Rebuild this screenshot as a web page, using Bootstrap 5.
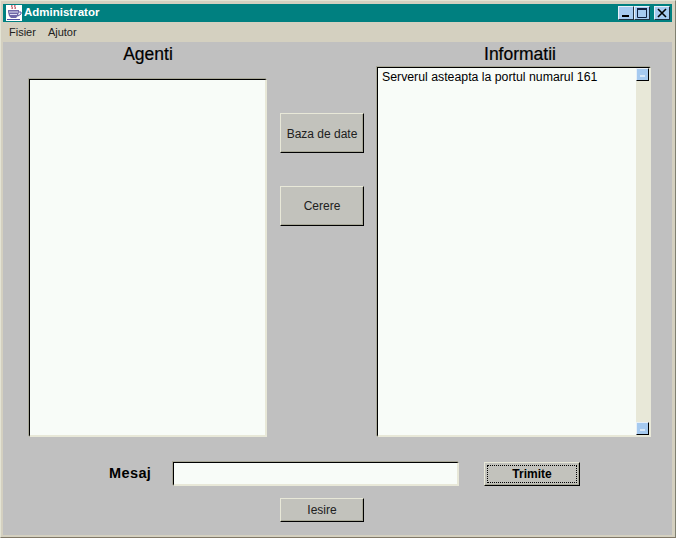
<!DOCTYPE html>
<html lang="ro">
<head>
<meta charset="utf-8">
<title>Administrator</title>
<link href="https://cdn.jsdelivr.net/npm/bootstrap@5.3.0/dist/css/bootstrap.min.css" rel="stylesheet">
<style>
html,body{margin:0;height:538px;overflow:hidden;background:#c0c0c0;}
body{font-family:"Liberation Sans",Arial,sans-serif;font-size:12px;color:#000;}
.win-frame{width:676px;height:538px;background:#d4d0c0;padding:3px 3px 2px 2px;border-left:1px solid #e4e4d4;border-top:1px solid #e4e4d4;border-right:1px solid #808070;border-bottom:1px solid #807868;}
.title-strip{height:18px;background:#008080;color:#fff;font-weight:700;font-size:11.5px;padding:0 2px 0 3px;}
.title-icon{margin-right:2px;margin-top:-1px;}
.ctl-btn{width:16px;height:14px;background:#a6caf0;border:1px solid;border-color:#e8f0f8 #203040 #203040 #e8f0f8;display:flex;align-items:center;justify-content:center;}
.menu-strip{height:20px;background:#d4d0c0;font-size:11px;color:#202020;padding:1px 0 0 6px;gap:12px;}
.work-area{height:493px;background:#c0c0c0;padding-left:26px;}
.col-left{width:238px;}
.col-right{width:274px;}
.head-label{height:25px;font-size:17.5px;line-height:24px;text-align:center;color:#000;-webkit-text-stroke:.2px #000;}
.head-right{padding-left:12px;}
.pane{background:#f8fcf8;border-style:solid;border-width:1px 2px 2px 1px;border-color:#000 #e8e8d8 #e8e8d8 #000;box-shadow:-1px -1px 0 #a8a898;}
.pane-left{height:358px;margin-top:12px;}
.pane-right{height:370px;font-size:12.3px;line-height:15px;}
.pane-text{padding:2px 4px;}
.bar-track{width:13px;background:#e8e8d8;}
.bar-end{height:13px;background:#a6caf0;border:1px solid;border-color:#e8f0f8 #000 #000 #e8f0f8;position:relative;}
.bar-end::after{content:"";position:absolute;left:3px;right:3px;top:6px;height:2px;background:#d8e8f8;}
.mid-col{width:84px;margin:0 13px;padding-top:71px;gap:33px;}
.old-btn{width:84px;height:40px;padding:0;background:#c2c2bc;border:1px solid;border-color:#e8e8d8 #000 #000 #e8e8d8;border-radius:0;font-size:12px;color:#202020;line-height:1;box-shadow:inset -1px -1px 0 #a8a898;}
.old-btn.btn-db{padding-top:1px;}
.bottom-line{height:24px;margin-top:25px;}
.mesaj-label{width:64px;margin-left:80px;font-weight:700;font-size:14.5px;letter-spacing:.4px;}
.msg-field{width:286px;height:24px;background:#f8fcf8;border-style:solid;border-width:1px 2px 2px 1px;border-color:#000 #e8e8d8 #e8e8d8 #000;box-shadow:-1px -1px 0 #a8a898;border-radius:0;padding:0;}
.btn-send{width:96px;height:24px;margin-left:25px;font-weight:700;position:relative;color:#000;}
.btn-send::after{content:"";position:absolute;inset:2px;border:1px dotted #000;}
.btn-exit{height:24px;margin:12px 0 0 251px;display:block;}
</style>
</head>
<body>
<div class="win-frame">
  <div class="title-strip d-flex align-items-center">
    <svg width="16" height="16" viewBox="0 0 16 16" class="title-icon flex-shrink-0">
      <rect width="16" height="16" fill="#fff"/>
      <path d="M6 0c-1 2 1 2 0 4M9 0c-1 2 1 2 0 4" stroke="#b02030" fill="none"/>
      <path d="M2 5h11v2l-1 4-2 2H5l-2-2-1-4z" fill="#7068a8"/>
      <path d="M3 7h9M4 9.500h7" stroke="#e0e0f4"/>
      <path d="M13 7h2v2l-3 2" fill="none" stroke="#5050a0"/>
      <path d="M1 14.500h13" stroke="#5050a0"/>
    </svg>
    <span>Administrator</span>
    <div class="ms-auto d-flex">
      <div class="ctl-btn"><svg width="10" height="10" viewBox="0 0 10 10"><rect x="1" y="7" width="7" height="2" fill="#000"/></svg></div>
      <div class="ctl-btn"><svg width="10" height="10" viewBox="0 0 10 10"><path d="M.5 1.500h9V9.500H.5z" fill="none" stroke="#102040"/><path d="M0 1h10" stroke="#102040" stroke-width="2"/></svg></div>
      <div class="ctl-btn ms-1"><svg width="10" height="10" viewBox="0 0 10 10"><path d="M1 1l8 8M9 1L1 9" stroke="#000" stroke-width="1.600"/></svg></div>
    </div>
  </div>
  <div class="menu-strip d-flex align-items-center">
    <span>Fisier</span><span>Ajutor</span>
  </div>
  <div class="work-area">
    <div class="d-flex">
      <div class="col-left">
        <div class="head-label">Agenti</div>
        <div class="pane pane-left"></div>
      </div>
      <div class="mid-col d-flex flex-column">
        <button type="button" class="btn old-btn btn-db">Baza de date</button>
        <button type="button" class="btn old-btn">Cerere</button>
      </div>
      <div class="col-right">
        <div class="head-label head-right">Informatii</div>
        <div class="pane pane-right d-flex">
          <div class="pane-text flex-grow-1">Serverul asteapta la portul numarul 161</div>
          <div class="bar-track d-flex flex-column justify-content-between">
            <div class="bar-end"></div>
            <div class="bar-end"></div>
          </div>
        </div>
      </div>
    </div>
    <div class="bottom-line d-flex align-items-center">
      <div class="mesaj-label">Mesaj</div>
      <input type="text" class="form-control msg-field" aria-label="Mesaj">
      <button type="button" class="btn old-btn btn-send">Trimite</button>
    </div>
    <button type="button" class="btn old-btn btn-exit">Iesire</button>
  </div>
</div>
</body>
</html>
